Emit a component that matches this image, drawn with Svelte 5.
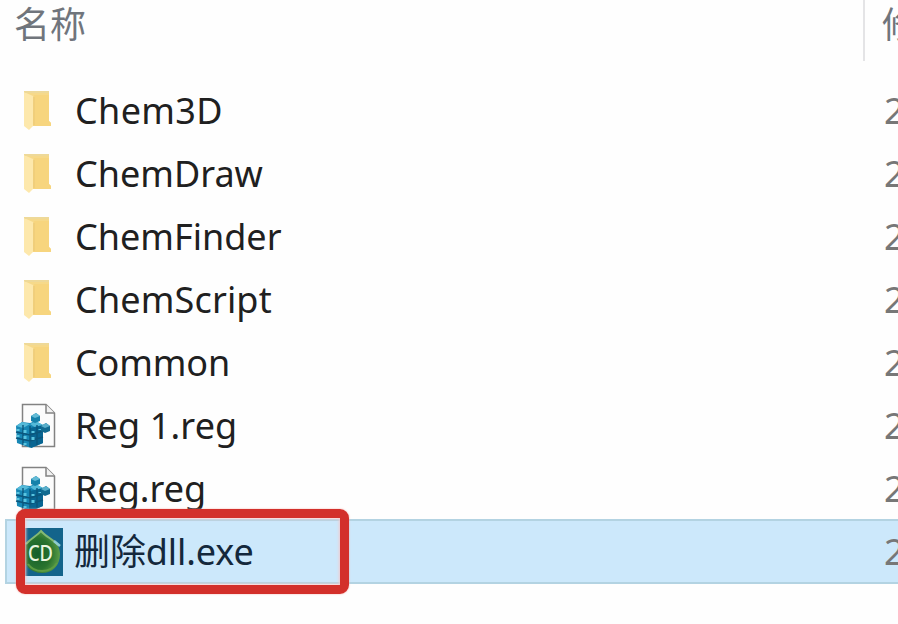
<script lang="ts">
  type Kind = "folder" | "reg" | "exe";

  interface Entry {
    name: string;
    kind: Kind;
    spacing: number;
    selected?: boolean;
  }

  const entries: Entry[] = [
    { name: "Chem3D", kind: "folder", spacing: 0.35 },
    { name: "ChemDraw", kind: "folder", spacing: 0 },
    { name: "ChemFinder", kind: "folder", spacing: 0 },
    { name: "ChemScript", kind: "folder", spacing: 0.15 },
    { name: "Common", kind: "folder", spacing: -0.15 },
    { name: "Reg 1.reg", kind: "reg", spacing: 0.15 },
    { name: "Reg.reg", kind: "reg", spacing: 0 },
    { name: "删除dll.exe", kind: "exe", spacing: -0.1, selected: true },
  ];
</script>

<div class="explorer">
  <header class="columns">
    <span class="col-name">名称</span>
    <span class="col-date">修</span>
  </header>

  <div class="list">
    {#each entries as entry}
      <div class="row" class:selected={entry.selected}>
        <div class="icon {entry.kind}">
          {#if entry.kind === "folder"}
            <svg width="40" height="48" viewBox="0 0 40 48">
              <path d="M8 4H33V34L35 36V39H15L8 38Z" fill="#f6d98a" />
              <path d="M18 8H33V34L35 36V39H17Z" fill="#f7d57e" />
              <path d="M8 5L17 9V39L13 43L8 39Z" fill="#fde8ac" />
              <path d="M8 4H33V6H9Z" fill="#eed999" />
              <path d="M18 10V38" stroke="#ecca78" stroke-width="1.2" />
            </svg>
          {:else if entry.kind === "reg"}
            <svg width="44" height="48" viewBox="0 0 44 48">
              <path d="M7.5 2.5H31L39.5 11V44.5H7.5Z" fill="#fcfcfc" stroke="#828282" stroke-width="1.5" />
              <path d="M31 2.5V11H39.5" fill="#f2f2f2" stroke="#828282" stroke-width="1.5" />
              <path d="M1 24L7 20L15 21L20 19L28 23V41L16 46L2 41Z" fill="#1787b5" />
              <path d="M1 24L7 20L15 22L8 26ZM15 22L21 19L28 23L21 26Z" fill="#54b9d8" />
              <path d="M15 26L28 23V41L16 46Z" fill="#086592" />
              <path d="M8 23V43M15 24V45M22 23V43M1 30L15 33L28 29M1 36L15 39L28 35" stroke="#0b567c" stroke-width="1.4" fill="none" />
              <path d="M3 27V29M10 28V31M18 29V31M25 27V28M3 33V35M10 34V37M18 35V38M10 41V43" stroke="#59c4df" stroke-width="3" />
              <path d="M16 14L21 11L25 14V19L20 21L16 19Z" fill="#1681aa" />
              <path d="M16 14L21 11L25 14L20 16Z" fill="#62bad5" />
              <path d="M26 24L31 21L35 24V29L30 31L26 29Z" fill="#126b91" />
              <path d="M26 24L31 21L35 24L30 26Z" fill="#58aeca" />
            </svg>
          {:else}
            <svg width="40" height="48" viewBox="0 0 40 48">
              <defs>
                <radialGradient id="badge" cx="40%" cy="55%" r="60%">
                  <stop offset="0" stop-color="#14602c" />
                  <stop offset="0.6" stop-color="#29732e" />
                  <stop offset="1" stop-color="#5b9c48" />
                </radialGradient>
              </defs>
              <rect width="40" height="48" fill="#13648b" />
              <path d="M18 2C24 9 37 13 37 26C37 38 29 45 19 45C8 45 0 37 0 26C0 13 12 10 18 2Z" fill="url(#badge)" />
              <path d="M3 16C8 10 14 8 18 3C23 9 30 11 35 17" fill="none" stroke="#83b875" stroke-width="2" />
              <path d="M31 13L37 18" stroke="#8ecbd0" stroke-width="2.5" />
              <path d="M5 36C11 45 27 46 34 35" fill="none" stroke="#5c9c42" stroke-width="2" />
              <text x="17.5" y="32.5" text-anchor="middle" textLength="25" lengthAdjust="spacingAndGlyphs">CD</text>
            </svg>
          {/if}
        </div>
        <span class="name" style="letter-spacing: {entry.spacing}px">{entry.name}</span>
        <span class="date">2</span>
      </div>
    {/each}
  </div>

  <div class="marker"></div>
</div>

<style>
  :global(body) {
    overflow: hidden;
    background: #fefefe;
  }
  .explorer {
    position: relative;
    width: 898px;
    height: 624px;
    overflow: hidden;
    font-family: "Noto Sans", "Noto Sans CJK SC", sans-serif;
    font-size: 36px;
    color: #202020;
  }
  .columns {
    display: flex;
    height: 61px;
    margin-bottom: 18px;
    line-height: 50px;
    color: #70757c;
  }
  .col-name {
    box-sizing: border-box;
    flex: 0 0 865px;
    padding-left: 14px;
    border-right: 2px solid #e4e4e6;
  }
  .col-date {
    padding-left: 17px;
    white-space: nowrap;
  }
  .row {
    box-sizing: border-box;
    display: flex;
    align-items: center;
    height: 63px;
    margin-left: 5px;
    border: 2px solid transparent;
    border-right: 0;
    white-space: nowrap;
  }
  .row.selected {
    height: 65px;
    margin-top: -1px;
    background: #cce8fb;
    border-color: #b3d3e2;
    color: #14283c;
  }
  .icon {
    display: flex;
    flex: 0 0 68px;
    padding-left: 8px;
    box-sizing: border-box;
  }
  .icon.folder {
    padding-left: 9px;
  }
  .icon.exe {
    padding-left: 16px;
  }
  .icon text {
    font-family: "Noto Sans", sans-serif;
    font-size: 22px;
    font-weight: 500;
    fill: #eaf6df;
  }
  .name {
    flex: 0 0 809px;
    line-height: 50px;
  }
  .row.selected .name {
    margin-left: -1px;
    margin-right: 1px;
  }
  .date {
    color: #777;
    line-height: 50px;
  }
  .marker {
    position: absolute;
    left: 16px;
    top: 509px;
    box-sizing: border-box;
    width: 333px;
    height: 85px;
    border: 9px solid #d3302b;
    border-radius: 9px;
    box-shadow: 0 0 2px #f6aaa5, inset 0 0 3px 1px #f3c9cd;
  }
</style>
